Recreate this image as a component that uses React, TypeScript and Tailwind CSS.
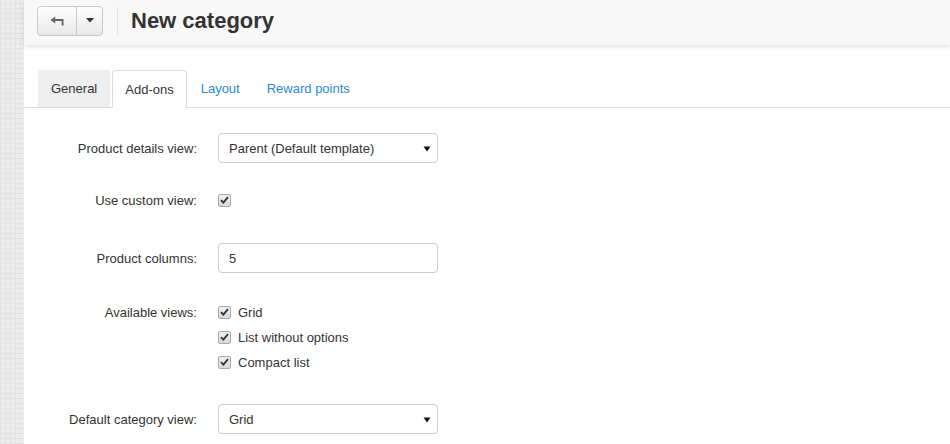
import React from "react"

const font = { fontFamily: '"Liberation Sans", Arial, sans-serif' }

const Check = () => (
  <span className="flex h-[13px] w-[13px] items-center justify-center rounded-[2px] border border-[#a9a9a9] bg-[linear-gradient(#f0f0f0,#d8d8d8)]">
    <svg width="9" height="8" viewBox="0 0 9 8">
      <path d="M1 4.2 L3.4 6.6 L8 1.2" fill="none" stroke="#333" strokeWidth="1.8" />
    </svg>
  </span>
)

const Select = ({ value }: { value: string }) => (
  <div className="flex h-[30px] w-[220px] items-center justify-between rounded-[4px] border border-[#cccccc] bg-white pl-[10px] pr-[6px] pt-px text-[13px] text-[#333]">
    <span>{value}</span>
    <svg width="8" height="6" viewBox="0 0 8 6">
      <path d="M0.5 0.5 H7.5 L4 5.5 Z" fill="#111" />
    </svg>
  </div>
)

const Label = ({ children }: { children: React.ReactNode }) => (
  <div className="w-[173px] shrink-0 pt-px text-right text-[13px] text-[#333]">{children}</div>
)

const App = () => {
  return (
    <div className="flex h-[444px] w-[950px] overflow-hidden bg-white" style={font}>
      <div className="h-full w-[24px] shrink-0 bg-[#ececec] bg-[repeating-linear-gradient(0deg,#e2e2e2_0,#e2e2e2_1px,transparent_1px,transparent_5px),repeating-linear-gradient(90deg,#e2e2e2_0,#e2e2e2_1px,transparent_1px,transparent_5px)]" />
      <div className="flex-1">
        <div className="relative flex h-[45px] items-center bg-[#f8f8f8] pl-[13px] shadow-[0_2px_4px_rgba(0,0,0,0.12)]">
          <div className="mt-[-4px] flex h-[30px] rounded-[4px] border border-[#c8c8c8] bg-[linear-gradient(#ffffff,#e8e8e8)]">
            <div className="flex w-[39px] items-center justify-center border-r border-[#c8c8c8]">
              <svg width="15" height="10" viewBox="0 0 15 10">
                <path d="M0.5 4 L5.2 0.4 V3 H13.5 V9.6 H11.6 V5 H5.2 V7.6 Z" fill="#666" />
              </svg>
            </div>
            <div className="flex w-[25px] items-center justify-center">
              <svg width="8" height="5" viewBox="0 0 8 5">
                <path d="M0 0 H8 L4 4.5 Z" fill="#333" />
              </svg>
            </div>
          </div>
          <div className="ml-[14px] mt-[-4px] h-[28px] w-px bg-[#e3e3e3]" />
          <h1 className="ml-[13px] mt-[-4px] text-[22px] font-bold text-[#333]">New category</h1>
        </div>

        <div className="mt-[25px] flex border-b border-[#dddddd] pl-[14px] text-[13px]">
          <div className="mb-[-1px] flex h-[37px] items-center rounded-t-[3px] bg-[#eeeeee] px-[13px] text-[#333]">General</div>
          <div className="mb-[-1px] ml-[2px] flex h-[38px] items-center rounded-t-[4px] border border-b-0 border-[#dddddd] bg-white px-[12px] text-[#333]">Add-ons</div>
          <div className="flex h-[37px] items-center px-[14px] text-[#2b8ad6]">Layout</div>
          <div className="flex h-[37px] items-center px-[13px] text-[#2b8ad6]">Reward points</div>
        </div>

        <div className="mt-[25px] flex items-center">
          <Label>Product details view:</Label>
          <div className="ml-[21px]">
            <Select value="Parent (Default template)" />
          </div>
        </div>

        <div className="mt-[27px] flex h-[20px] items-center">
          <Label>Use custom view:</Label>
          <div className="ml-[21px]">
            <Check />
          </div>
        </div>

        <div className="mt-[33px] flex items-center">
          <Label>Product columns:</Label>
          <div className="ml-[21px] flex h-[30px] w-[220px] items-center rounded-[4px] border border-[#cccccc] bg-white px-[10px] pt-px text-[13px] text-[#333]">
            5
          </div>
        </div>

        <div className="mt-[29px] flex items-start">
          <div className="flex h-[20px] items-center">
            <Label>Available views:</Label>
          </div>
          <div className="ml-[21px] flex flex-col gap-[5px] text-[13px] text-[#333]">
            {["Grid", "List without options", "Compact list"].map((v) => (
              <div key={v} className="flex h-[20px] items-center gap-[7px]">
                <Check />
                <span className="pt-px">{v}</span>
              </div>
            ))}
          </div>
        </div>

        <div className="mt-[32px] flex items-center">
          <Label>Default category view:</Label>
          <div className="ml-[21px]">
            <Select value="Grid" />
          </div>
        </div>
      </div>
    </div>
  )
}

export default App
